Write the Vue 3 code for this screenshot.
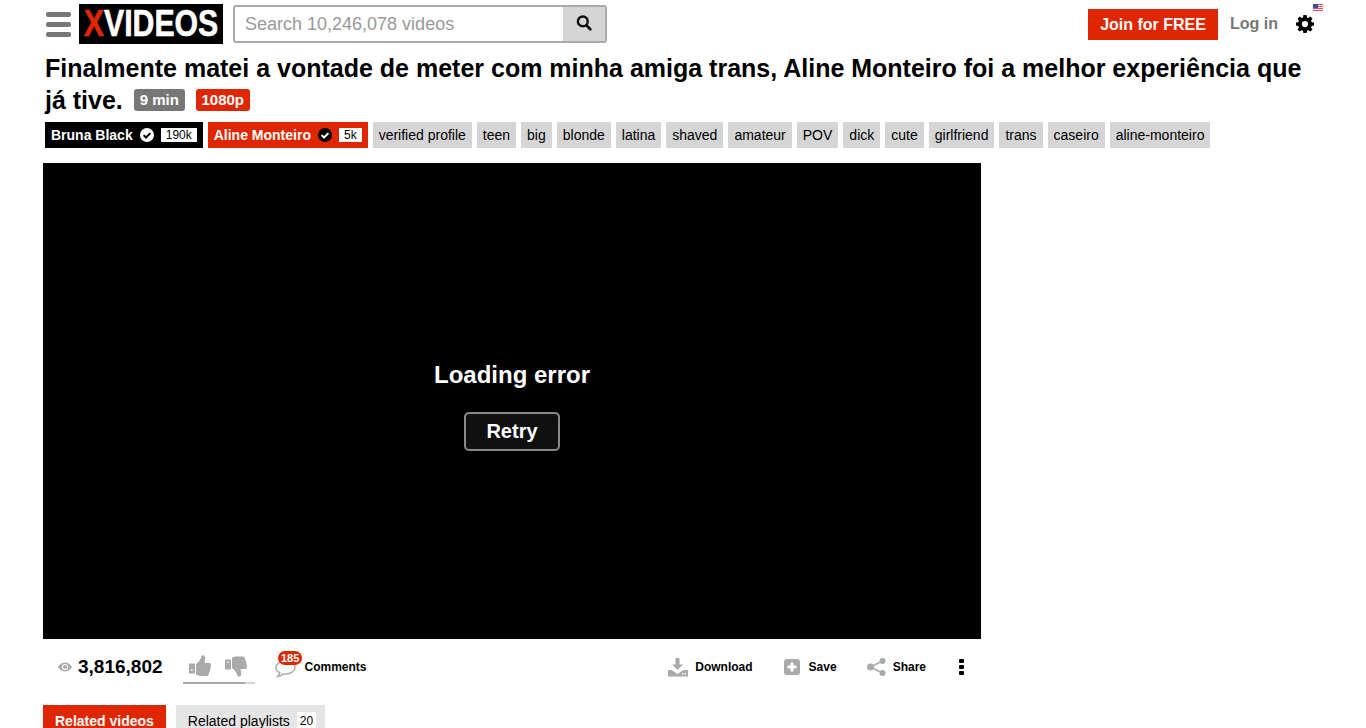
<template>
  <div class="page">
    <header class="header">
      <div class="burger"><span></span><span></span><span></span></div>
      <div class="logo"><span class="logo-text"><b class="x">X</b>VIDEOS</span></div>
      <div class="search">
        <div class="search-input">Search 10,246,078 videos</div>
        <div class="search-btn">
          <svg width="16" height="16" viewBox="0 0 16 16">
            <circle cx="6.800" cy="6.400" r="4.900" fill="none" stroke="#111" stroke-width="2.400" />
            <path d="M10.400 10.200 14.300 14.200" stroke="#111" stroke-width="2.800" stroke-linecap="round" />
          </svg>
        </div>
      </div>
      <div class="header-right">
        <a class="join">Join for FREE</a>
        <a class="login">Log in</a>
        <div class="gear">
          <svg width="18" height="18" viewBox="0 0 18 18">
            <path
              fill-rule="evenodd"
              d="M7.400 0h3.200l.4 2.400 1.300.6 2-1.400 2.200 2.200-1.400 2 .6 1.400 2.300.4v3l-2.300.4-.6 1.400 1.400 2-2.200 2.200-2-1.400-1.300.6-.4 2.300H7.400L7 15.800l-1.300-.6-2 1.400-2.200-2.200 1.400-2-.6-1.400L0 10.600v-3l2.300-.4.6-1.400-1.400-2 2.200-2.200 2 1.400L7 2.400zM9 6a3.100 3.100 0 1 0 0 6.200A3.100 3.100 0 0 0 9 6z"
            />
          </svg>
          <svg class="flag" width="10" height="8" viewBox="0 0 10 8">
            <rect width="10" height="8" fill="#f4f4f8" />
            <path d="M0 .5h10M0 2.500h10M0 4.500h10M0 6.500h10" stroke="#e0505a" stroke-width="1" />
            <rect width="5" height="4" fill="#3d4a9e" />
          </svg>
        </div>
      </div>
    </header>

    <h1 class="title">
      Finalmente matei a vontade de meter com minha amiga trans, Aline Monteiro foi a melhor experiência que já tive.
      <span class="badge grey">9 min</span>
      <span class="badge red">1080p</span>
    </h1>

    <div class="tags">
      <a class="tag model black">
        Bruna Black
        <svg class="check" width="14" height="14" viewBox="0 0 14 14">
          <circle cx="7" cy="7" r="7" fill="#fff" />
          <path d="M3.600 7.100 6 9.500l4.400-4.400" fill="none" stroke="#000" stroke-width="2" />
        </svg>
        <span class="count">190k</span>
      </a>
      <a class="tag model red-tag">
        Aline Monteiro
        <svg class="check" width="14" height="14" viewBox="0 0 14 14">
          <circle cx="7" cy="7" r="7" fill="#000" />
          <path d="M3.600 7.100 6 9.500l4.400-4.400" fill="none" stroke="#fff" stroke-width="2" />
        </svg>
        <span class="count">5k</span>
      </a>
      <a v-for="t in tags" :key="t" class="tag">{{ t }}</a>
    </div>

    <div class="player">
      <div class="error-text">Loading error</div>
      <button class="retry">Retry</button>
    </div>

    <div class="actions">
      <div class="views">
        <svg width="14" height="10" viewBox="0 0 14 10">
          <path d="M0 5C2 1.700 4.400 .5 7 .5S12 1.700 14 5c-2 3.300-4.400 4.500-7 4.500S2 8.300 0 5z" fill="#aaa" />
          <circle cx="7" cy="5" r="3.100" fill="#fff" />
          <circle cx="7" cy="5" r="2.100" fill="#aaa" />
        </svg>
        <span class="view-count">3,816,802</span>
      </div>
      <div class="votes">
        <div class="vote-icons">
          <svg width="22" height="22" viewBox="0 0 22 22">
            <path fill="#aaa" fill-rule="evenodd" d="M0 8.500h6v10H0zM2 14.500V16h1.500v-1.500zM7 9C10 7 12 4 12.500 1 13 0 15.500 0 16 2 16.500 4 16 6 15.500 8H20.500C22 8 22.300 10 21.500 11 22 12 22 13 21 14 21.500 15 21 16.500 20 17 20.500 18.500 19.500 21 18 21H12C10 21 8.500 20 7 19.500z" />
          </svg>
          <svg width="22" height="22" viewBox="0 0 22 22">
            <path fill="#aaa" fill-rule="evenodd" d="M0 4.500h6v10H0zM2 6.500V8h1.500V6.500zM7 13C10 15 12 18 12.500 21 13 22 15.500 22 16 20 16.500 18 16 16 15.500 14H20.500C22 14 22.300 12 21.500 11 22 10 22 9 21 8 21.500 7 21 5.500 20 5 20.500 3.500 19.500 1.500 18 1.500H12C10 1.500 8.500 2 7 2.500z" />
          </svg>
        </div>
        <div class="vote-bar"><div class="vote-fill" :style="{ width: votePercent + '%' }"></div></div>
      </div>
      <div class="comments">
        <div class="bubble">
          <svg width="21" height="20" viewBox="0 0 21 20">
            <path fill="none" stroke="#aaa" stroke-width="1.500" d="M10.500 2C5.300 2 1 4.800 1 8.500c0 2.300 1.500 4.200 3.800 5.300-.3 1.300-1 2.500-2.300 3.700 2.500-.3 4.600-1.300 6-2.600l2 .1c5.200 0 9.500-2.900 9.500-6.500S15.700 2 10.500 2z" />
          </svg>
          <span class="bubble-count">185</span>
        </div>
        <span class="action-label">Comments</span>
      </div>
      <div class="spacer"></div>
      <div class="action download">
        <svg width="20" height="19" viewBox="0 0 20 19">
          <path fill="#aaa" d="M7.500 0h4v6.500H15L9.500 12 4 6.500h3.500zM0 12h3.500l6 4 6-4H20v6.500H0z" />
          <rect x="14" y="15" width="1.500" height="1.500" fill="#fff" />
          <rect x="16.500" y="15" width="1.500" height="1.500" fill="#fff" />
        </svg>
        <span class="action-label">Download</span>
      </div>
      <div class="action save">
        <svg width="16" height="16" viewBox="0 0 16 16">
          <rect width="16" height="16" rx="3" fill="#aaa" />
          <path d="M8 3.500v9M3.500 8h9" stroke="#fff" stroke-width="3" />
        </svg>
        <span class="action-label">Save</span>
      </div>
      <div class="action share">
        <svg width="19" height="18" viewBox="0 0 19 18">
          <path d="M15.500 3 3.500 9l12 6" fill="none" stroke="#aaa" stroke-width="1.500" />
          <circle cx="15.500" cy="3" r="3" fill="#aaa" />
          <circle cx="3.500" cy="9" r="3.500" fill="#aaa" />
          <circle cx="15.500" cy="15" r="3" fill="#aaa" />
        </svg>
        <span class="action-label">Share</span>
      </div>
      <div class="more"><span></span><span></span><span></span></div>
    </div>

    <div class="tabs">
      <a class="tab active">Related videos</a>
      <a class="tab playlists">Related playlists <span class="tab-count">20</span></a>
    </div>
  </div>
</template>

<script setup>
const tags = [
  'verified profile',
  'teen',
  'big',
  'blonde',
  'latina',
  'shaved',
  'amateur',
  'POV',
  'dick',
  'cute',
  'girlfriend',
  'trans',
  'caseiro',
  'aline-monteiro',
]

const votePercent = 86
</script>

<style>
html,
body {
  overflow: hidden;
}
</style>

<style scoped>
.page {
  height: 728px;
  overflow: hidden;
  background: #fff;
  color: #000;
  font-family: "Liberation Sans", Arial, sans-serif;
}

.header {
  display: flex;
  align-items: center;
  height: 48px;
  padding: 0 52px 0 46px;
}

.burger {
  display: flex;
  flex-direction: column;
  gap: 5px;
  width: 25px;
  margin-right: 8px;
}

.burger span {
  display: block;
  height: 5px;
  border-radius: 2px;
  background: #777;
}

.logo {
  display: flex;
  align-items: center;
  justify-content: center;
  width: 144px;
  height: 40px;
  margin-right: 10px;
  background: #000;
  overflow: hidden;
}

.logo-text {
  display: inline-block;
  color: #fff;
  font-size: 36px;
  font-weight: 700;
  line-height: 40px;
  white-space: nowrap;
  transform: scaleX(0.84);
  -webkit-text-stroke: 0.6px #fff;
}

.logo-text .x {
  color: #de2600;
  -webkit-text-stroke: 0.6px #de2600;
}

.search {
  display: flex;
  box-sizing: border-box;
  width: 374px;
  height: 38px;
  border: 2px solid #aaa;
  border-radius: 3px;
}

.search-input {
  flex: 1;
  padding-left: 10px;
  color: #999;
  font-size: 18px;
  line-height: 34px;
}

.search-btn {
  display: flex;
  align-items: center;
  justify-content: center;
  width: 42px;
  padding-bottom: 2px;
  box-sizing: border-box;
  background: #d5d5d5;
}

.header-right {
  display: flex;
  align-items: center;
  margin-left: auto;
}

.join {
  width: 130px;
  height: 31px;
  background: #de2600;
  color: #fff;
  font-size: 16px;
  font-weight: 700;
  line-height: 31px;
  text-align: center;
}

.login {
  margin-left: 12px;
  color: #777;
  font-size: 16px;
  font-weight: 700;
}

.gear {
  position: relative;
  display: flex;
  margin-left: 18px;
}

.flag {
  position: absolute;
  top: -11px;
  left: 17px;
}

.title {
  margin: 4px 40px 0 45px;
  font-size: 25px;
  font-weight: 700;
  line-height: 32px;
}

.badge {
  display: inline-block;
  padding: 0 6px;
  border-radius: 3px;
  color: #fff;
  font-size: 15px;
  line-height: 22px;
  vertical-align: 4px;
}

.badge.grey {
  margin-left: 4px;
  background: #777;
}

.badge.red {
  margin-left: 11px;
  padding: 0 5.500px;
  background: #de2600;
}

.tags {
  display: flex;
  gap: 5px;
  margin: 6px 0 0 45px;
}

.tag {
  display: flex;
  align-items: center;
  height: 26px;
  padding: 0 6px;
  background: #d5d5d5;
  font-size: 14px;
  white-space: nowrap;
}

.tag.model {
  color: #fff;
  font-weight: 700;
}

.tag.black {
  background: #000;
}

.tag.red-tag {
  background: #de2600;
}

.check {
  margin-left: 7px;
}

.count {
  margin-left: 7px;
  padding: 0 5px;
  background: #fff;
  color: #000;
  font-size: 12px;
  font-weight: 400;
  line-height: 14px;
}

.player {
  display: flex;
  flex-direction: column;
  align-items: center;
  justify-content: center;
  box-sizing: border-box;
  width: 938px;
  height: 476px;
  margin: 15px 0 0 43px;
  padding-top: 10px;
  background: #000;
  color: #fff;
}

.error-text {
  font-size: 24px;
  font-weight: 700;
  line-height: 28px;
}

.retry {
  box-sizing: border-box;
  width: 96px;
  height: 39px;
  margin-top: 23px;
  border: 2px solid #888;
  border-radius: 5px;
  background: #101010;
  color: #fff;
  font-family: inherit;
  font-size: 20px;
  font-weight: 700;
}

.actions {
  display: flex;
  align-items: center;
  width: 938px;
  height: 56px;
  margin-left: 43px;
  box-sizing: border-box;
  padding: 0 0 0 15px;
}

.views {
  display: flex;
  align-items: center;
  gap: 6px;
  width: 125px;
}

.view-count {
  font-size: 19px;
  font-weight: 700;
}

.votes {
  width: 72px;
  margin-right: 20px;
}

.vote-icons {
  display: flex;
  gap: 14px;
  padding: 4px 0 0 6px;
}

.vote-bar {
  height: 2px;
  margin-top: 5px;
  background: #d5d5d5;
}

.vote-fill {
  height: 2px;
  background: #aaa;
}

.comments {
  display: flex;
  align-items: center;
}

.bubble {
  position: relative;
  display: flex;
  width: 29.500px;
  padding-top: 3px;
}

.bubble-count {
  position: absolute;
  top: -5px;
  left: 3px;
  padding: 0 3px;
  border-radius: 7px;
  background: #de2600;
  color: #fff;
  font-size: 11px;
  font-weight: 700;
  line-height: 14px;
}

.action-label {
  color: #000;
  font-size: 12px;
  font-weight: 700;
}

.spacer {
  flex: 1;
}

.action {
  display: flex;
  align-items: center;
}

.download {
  gap: 7px;
  margin-right: 31px;
}

.save {
  gap: 9px;
  margin-right: 30px;
}

.share {
  gap: 7px;
  margin-right: 33px;
}

.more {
  display: flex;
  flex-direction: column;
  gap: 2px;
  margin-right: 17px;
}

.more span {
  display: block;
  width: 5px;
  height: 4px;
  border-radius: 1px;
  background: #000;
}

.tabs {
  display: flex;
  gap: 10px;
  margin: 10px 0 0 43px;
}

.tab {
  display: flex;
  align-items: center;
  height: 32px;
  padding: 0 12px;
  background: #e5e5e5;
  font-size: 14px;
}

.tab.playlists {
  padding-right: 9px;
}

.tab.active {
  background: #de2600;
  color: #fff;
  font-weight: 700;
}

.tab-count {
  margin-left: 7px;
  padding: 0 3px;
  background: #fff;
  font-size: 12px;
  line-height: 18px;
}
</style>
